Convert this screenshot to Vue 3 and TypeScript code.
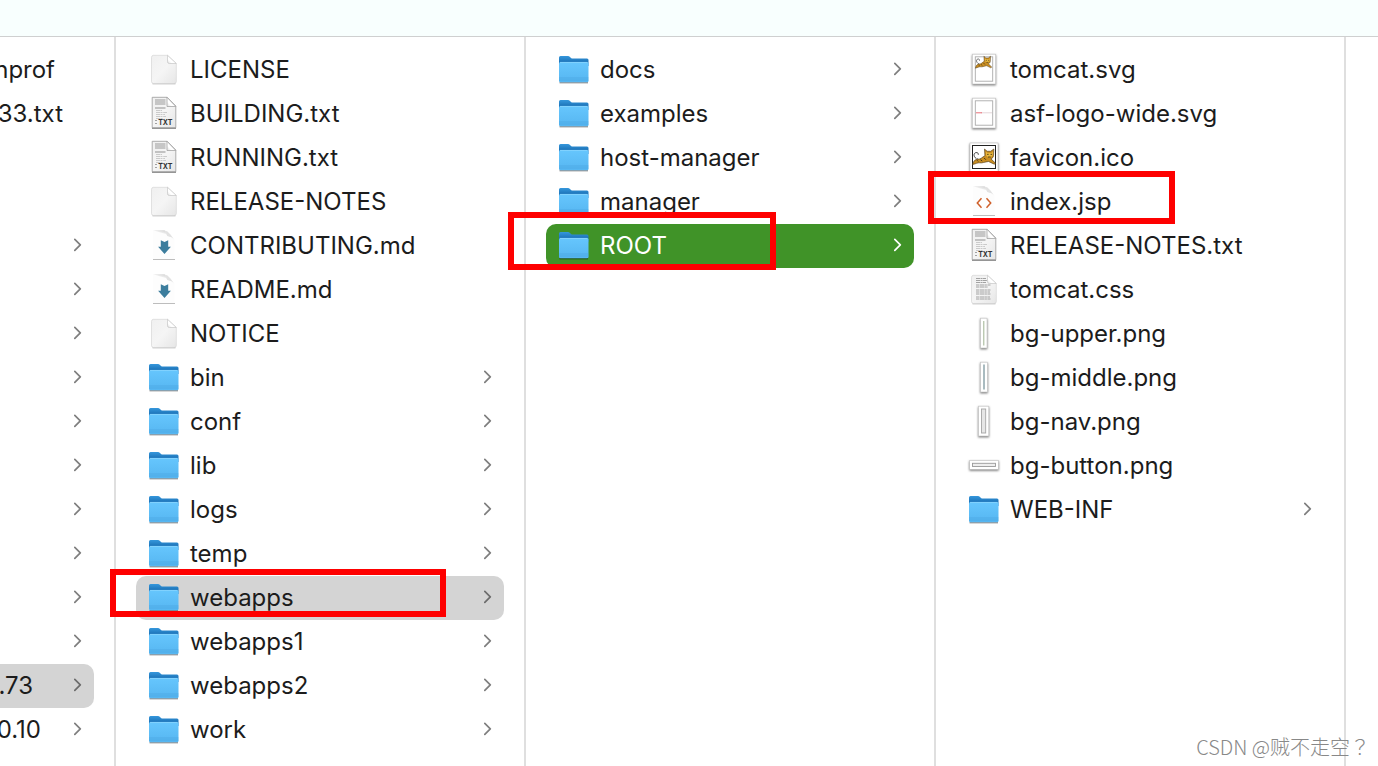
<script setup lang="ts">
type Icon = 'blank' | 'txt' | 'md' | 'folder' | 'cat' | 'wide' | 'favicon' | 'code' | 'css' | 'upper' | 'middle' | 'nav' | 'button' | 'none'

interface Entry {
  name: string
  icon: Icon
  folder?: boolean
  selected?: 'active' | 'path'
  /** Visible width of a name whose start is scrolled out of view. */
  tail?: number
}

const dir = (name: string, selected?: 'active' | 'path'): Entry => ({ name, icon: 'folder', folder: true, selected })
const file = (name: string, icon: Icon): Entry => ({ name, icon })
const scrolled = (name = '', tail = 0, folder = true, selected?: 'path'): Entry => ({ name, icon: 'none', tail, folder, selected })

const columns: Entry[][] = [
  [
    scrolled('nprof', 55, false),
    scrolled('33.txt', 63, false),
    scrolled('', 0, false),
    scrolled('', 0, false),
    ...Array.from({ length: 10 }, () => scrolled()),
    scrolled('.73', 33, true, 'path'),
    scrolled('0.10', 41),
  ],
  [
    file('LICENSE', 'blank'),
    file('BUILDING.txt', 'txt'),
    file('RUNNING.txt', 'txt'),
    file('RELEASE-NOTES', 'blank'),
    file('CONTRIBUTING.md', 'md'),
    file('README.md', 'md'),
    file('NOTICE', 'blank'),
    dir('bin'),
    dir('conf'),
    dir('lib'),
    dir('logs'),
    dir('temp'),
    dir('webapps', 'path'),
    dir('webapps1'),
    dir('webapps2'),
    dir('work'),
  ],
  [dir('docs'), dir('examples'), dir('host-manager'), dir('manager'), dir('ROOT', 'active')],
  [
    file('tomcat.svg', 'cat'),
    file('asf-logo-wide.svg', 'wide'),
    file('favicon.ico', 'favicon'),
    file('index.jsp', 'code'),
    file('RELEASE-NOTES.txt', 'txt'),
    file('tomcat.css', 'css'),
    file('bg-upper.png', 'upper'),
    file('bg-middle.png', 'middle'),
    file('bg-nav.png', 'nav'),
    file('bg-button.png', 'button'),
    dir('WEB-INF'),
  ],
]
</script>

<template>
  <div class="finder">
    <svg class="defs" width="0" height="0" aria-hidden="true">
      <defs>
        <linearGradient id="paper" x1="0" y1="0" x2="1" y2="1">
          <stop offset="0" stop-color="#f0f0f0" />
          <stop offset=".5" stop-color="#f5f5f5" />
          <stop offset="1" stop-color="#e6e6e6" />
        </linearGradient>
        <linearGradient id="fold" x1="0" y1="1" x2="1" y2="0">
          <stop offset="0" stop-color="#dcdcdc" />
          <stop offset=".3" stop-color="#ffffff" />
        </linearGradient>
        <linearGradient id="curl" x1="0" y1="1" x2="1" y2="0">
          <stop offset=".3" stop-color="#fcfcfc" />
          <stop offset="1" stop-color="#cfcfcf" />
        </linearGradient>
        <linearGradient id="front" x1="0" y1="0" x2="0" y2="1">
          <stop offset="0" stop-color="#66c6fd" />
          <stop offset="1" stop-color="#56b6f1" />
        </linearGradient>
        <linearGradient id="back" x1="0" y1="0" x2="0" y2="1">
          <stop offset="0" stop-color="#3597dc" />
          <stop offset=".6" stop-color="#1d74b9" />
        </linearGradient>
        <g id="cat-art">
          <path d="M7 17.500c-3-2-3-6 0-6.500 2-.3 3 1.200 2.500 2.500M7.500 17l3 3" fill="none" stroke="#333" stroke-width="1" />
          <path d="M3 24.500c1-4 3-6 6-6 3.500 0 5-2.500 8-4l-.5-7.500 3 2.500h4L27 7l-.3 7c0 2-1.200 3.500-3 4l5.300 5-1.500 1-6.500-3c-4 .5-7 2-10 1.500-2-.3-4 1-8 2z" fill="#c98e22" stroke="#4a3718" stroke-width=".7" />
          <path d="M18 10l2 1.500h4L26 10l-.5 4.500L22 17l-3.500-2.500z" fill="#e9b93f" />
          <path d="M19.500 13h1.600M23.300 13h1.600M20.500 16h3M12 19l2 1.500M16 17l2 2M8 19.500l1.500 1.500" stroke="#3a2b13" stroke-width="1" />
        </g>
      </defs>
    </svg>

    <header class="toolbar"></header>

    <main class="browser">
      <ul v-for="(column, c) in columns" :key="c" class="column">
        <li v-for="(entry, r) in column" :key="r">
          <button type="button" class="row" :class="[entry.selected, { scrolled: entry.icon === 'none' }]" :aria-label="entry.name || 'Folder item'">
            <svg v-if="entry.icon !== 'none'" class="icon" viewBox="0 0 32 32" aria-hidden="true">
              <g v-if="entry.icon === 'folder'">
                <path d="M1.500 28.700h28.500" stroke="#000" stroke-opacity=".4" stroke-width="1.400" />
                <path d="M1 3.500Q1 2 2.500 2h7.500q1 0 2 1l1 1q.7.600 2 .6h14q1.500 0 1.500 1.500V12H1z" fill="url(#back)" />
                <path d="M1 9.500Q1 8 2.500 8h26.500q1.500 0 1.500 1.500v17.300q0 1.500-1.500 1.500h-26.500Q1 28.300 1 26.800z" fill="url(#front)" />
                <path d="M2 8.400h27.500" stroke="#90d8ff" stroke-width=".7" />
                <path d="M1 24h29.500M1 26h29.500" stroke="#48a2de" stroke-width=".6" />
              </g>
              <g v-else-if="entry.icon === 'blank' || entry.icon === 'css'">
                <path d="M4.500 29.800h23" stroke="#000" stroke-opacity=".3" stroke-width="1" />
                <path d="M5.500 1.300h14L28.300 9.500v18q0 2-2 2H5.500q-2 0-2-2v-24.200q0-2 2-2z" fill="url(#paper)" stroke="#d0d0d0" stroke-width=".6" />
                <path d="M19.500 1.300L28.300 9.500h-7q-1.800 0-1.800-1.800z" fill="url(#fold)" stroke="#bdbdbd" stroke-width=".6" />
                <g v-if="entry.icon === 'css'" stroke="#999" stroke-width=".9" fill="none">
                  <path d="M8 4.500h10M8 6.500h11M8 8.500h10" stroke-dasharray="4 .5 2 .4" />
                  <path d="M8 11h15M8 13h12M8 16h15M8 18h14M8 20h15M8 23h14M8 25h15" stroke-dasharray="3 .5 5 .4 2 .5" />
                </g>
              </g>
              <g v-else-if="entry.icon === 'txt'">
                <path d="M4 30h24" stroke="#000" stroke-opacity=".6" stroke-width="1.400" />
                <path d="M4.200-.7h15L27.800 8v21.700H4.200z" fill="url(#paper)" stroke="#999" stroke-width=".8" />
                <path d="M19 -.7L27.800 8.500H19z" fill="url(#fold)" stroke="#999" stroke-width=".7" />
                <path d="M7 2h10.500M7 4h10.500M7 6h10.500" stroke="#9a9a9a" stroke-width="1.100" />
                <path d="M7 10h10.500" stroke="#9a9a9a" stroke-width="1.100" />
                <path d="M8 12.500h6M8 14.500h11M8 16.500h9M8 18.500h10M8 20.500h7" stroke="#bfbfbf" stroke-width=".8" stroke-dasharray="4 .5 2 .7" />
                <path d="M7 22.500h2M7 25.500h2" stroke="#999" stroke-width=".9" />
                <text x="10.200" y="26.600" class="badge">TXT</text>
              </g>
              <g v-else-if="entry.icon === 'md' || entry.icon === 'code'">
                <path d="M5 .3h11.500L26.500 10V29H5z" fill="#fdfdfd" />
                <path d="M5 .3h11.500q2 1 2.200 4 .2 2 3 2.200 3.500.500 4.800 3.500L16.500.3z" fill="url(#curl)" />
                <path d="M5 .3h11.500q2 1 2.200 4L14 3z" fill="url(#curl)" />
                <path d="M16.500.5q2 1 2 4 .3 1.800 2.500 2 4 .5 5.500 3.500l-4-5.500-3-3z" fill="#e2e2e2" />
                <path d="M5 29.500h22" stroke="#bdbdbd" stroke-width="1" />
                <path v-if="entry.icon === 'md'" d="M12.800 10.200l3.700 1.700 3.700-1.700v6.500h2.700l-6.400 7.300-6.400-7.300h2.700z" fill="#3c7d9d" />
                <path v-else d="M13.500 12.300L9.300 17l4.200 4.700M18.500 12.300L22.700 17l-4.200 4.700" fill="none" stroke="#cf5f29" stroke-width="1.500" />
              </g>
              <g v-else>
                <g v-if="entry.icon === 'cat' || entry.icon === 'wide'">
                  <rect x="4.300" y=".2" width="23.400" height="29.800" class="sheet" />
                  <rect x="7.300" y="2.800" width="17.400" height="24.400" fill="#fff" stroke="#aaa" stroke-width=".9" />
                  <use v-if="entry.icon === 'cat'" href="#cat-art" transform="translate(5.500 -2.500) scale(.63 .68)" />
                  <template v-else>
                    <path d="M13 14.800h11" stroke="#d9c4c8" stroke-width=".7" />
                    <path d="M8 14.800h6" stroke="#e8606a" stroke-width=".9" />
                  </template>
                </g>
                <g v-else-if="entry.icon === 'favicon'">
                  <rect x="2" y="1" width="28" height="28.500" class="sheet" />
                  <rect x="4.500" y="3.500" width="23" height="23" fill="#fff" stroke="#222" />
                  <use href="#cat-art" transform="translate(1.800 .8) scale(.89)" />
                </g>
                <g v-else-if="entry.icon === 'upper'">
                  <rect x="12.500" y=".2" width="6.500" height="29.800" class="sheet" />
                  <path d="M15.800 3v24.500" stroke="#9fb292" stroke-width="1" />
                </g>
                <g v-else-if="entry.icon === 'middle'">
                  <rect x="12.500" y=".2" width="7" height="29.800" class="sheet" />
                  <path d="M16 2.500v25" stroke="#a9bbc0" stroke-width="2" />
                </g>
                <g v-else-if="entry.icon === 'nav'">
                  <rect x="10.500" y=".2" width="10.300" height="29.800" class="sheet" />
                  <rect x="13.500" y="3" width="4.200" height="24" fill="#e6e6e6" stroke="#a5a5a5" stroke-width=".9" />
                </g>
                <g v-else>
                  <rect x="1.700" y="10.500" width="28.600" height="8.800" class="sheet" />
                  <rect x="4.500" y="13.300" width="23" height="3.200" fill="#eee" stroke="#999" stroke-width=".9" />
                </g>
              </g>
            </svg>
            <span class="name" :style="entry.tail ? { width: entry.tail + 'px' } : undefined">{{ entry.name }}</span>
            <svg v-if="entry.folder" class="chevron" viewBox="0 0 8 16" aria-hidden="true">
              <path d="M.8 1.300l5.500 5.500L.8 12.300" />
            </svg>
          </button>
        </li>
      </ul>
      <div class="rest"></div>
    </main>

    <div class="mark mark-webapps"></div>
    <div class="mark mark-root"></div>
    <div class="mark mark-index"></div>
    <div class="watermark">CSDN @贼不走空<span class="centered-mark">？</span></div>
  </div>
</template>

<style>
body {
  margin: 0;
  background: #fff;
}
</style>

<style scoped>
.finder {
  position: relative;
  display: flex;
  flex-direction: column;
  min-height: 100vh;
  overflow: hidden;
  background: #fff;
  color: #1c1c1c;
  font-family: Inter, "Noto Sans CJK SC", sans-serif;
  font-size: 24px;
}

.defs {
  position: absolute;
}

.toolbar {
  height: 36px;
  border-bottom: 1px solid #cfd0d0;
  background: #f8fffe;
}

.browser {
  flex: 1;
  display: grid;
  grid-template-columns: 116px repeat(3, 410px) 1fr;
}

.column {
  box-sizing: border-box;
  min-width: 0;
  margin: 0;
  padding: 11px 20px 0;
  border-right: 2px solid #dfdfdf;
  list-style: none;
}

.column:first-child {
  padding-left: 0;
}

.row {
  display: flex;
  align-items: center;
  gap: 10px;
  box-sizing: border-box;
  width: 100%;
  height: 44px;
  padding: 0 12px;
  border: 0;
  border-radius: 10px;
  background: none;
  color: inherit;
  font: inherit;
  line-height: 32px;
  text-align: left;
}

.row.scrolled {
  padding-left: 0;
  border-radius: 0 10px 10px 0;
}

.row.path {
  background: #d4d4d4;
}

.row.active {
  background: #409328;
  color: #fff;
}

.icon {
  flex: none;
  width: 32px;
  height: 32px;
  overflow: visible;
}

.sheet {
  fill: #fff;
  stroke: #c4c4c4;
  stroke-width: 0.6px;
  filter: drop-shadow(0 1px 1px rgba(0, 0, 0, 0.55));
}

.badge {
  fill: #333;
  font: 700 7px Inter, sans-serif;
}

.name {
  white-space: nowrap;
}

.scrolled .name {
  display: flex;
  justify-content: flex-end;
  overflow: hidden;
}

.chevron {
  flex: none;
  width: 8px;
  height: 16px;
  margin-left: auto;
  fill: none;
  stroke: #7f7f7f;
  stroke-width: 1.7px;
  stroke-linecap: round;
  stroke-linejoin: round;
}

.path .chevron {
  stroke: #6c6c6c;
}

.active .chevron {
  stroke: #fff;
}

.mark {
  position: absolute;
  box-sizing: border-box;
  border: 6px solid #fe0000;
  pointer-events: none;
}

.mark-webapps {
  left: 110px;
  top: 569px;
  width: 336px;
  height: 48px;
}

.mark-root {
  left: 508px;
  top: 212px;
  width: 268px;
  height: 58px;
}

.mark-index {
  left: 928px;
  top: 171px;
  width: 247px;
  height: 53px;
}

.watermark {
  position: absolute;
  right: 8px;
  bottom: 4px;
  color: #888;
  font: 300 20px/30px "Noto Sans CJK SC", sans-serif;
  white-space: nowrap;
}

.centered-mark {
  font-family: "Noto Sans CJK TC", sans-serif;
}
</style>
